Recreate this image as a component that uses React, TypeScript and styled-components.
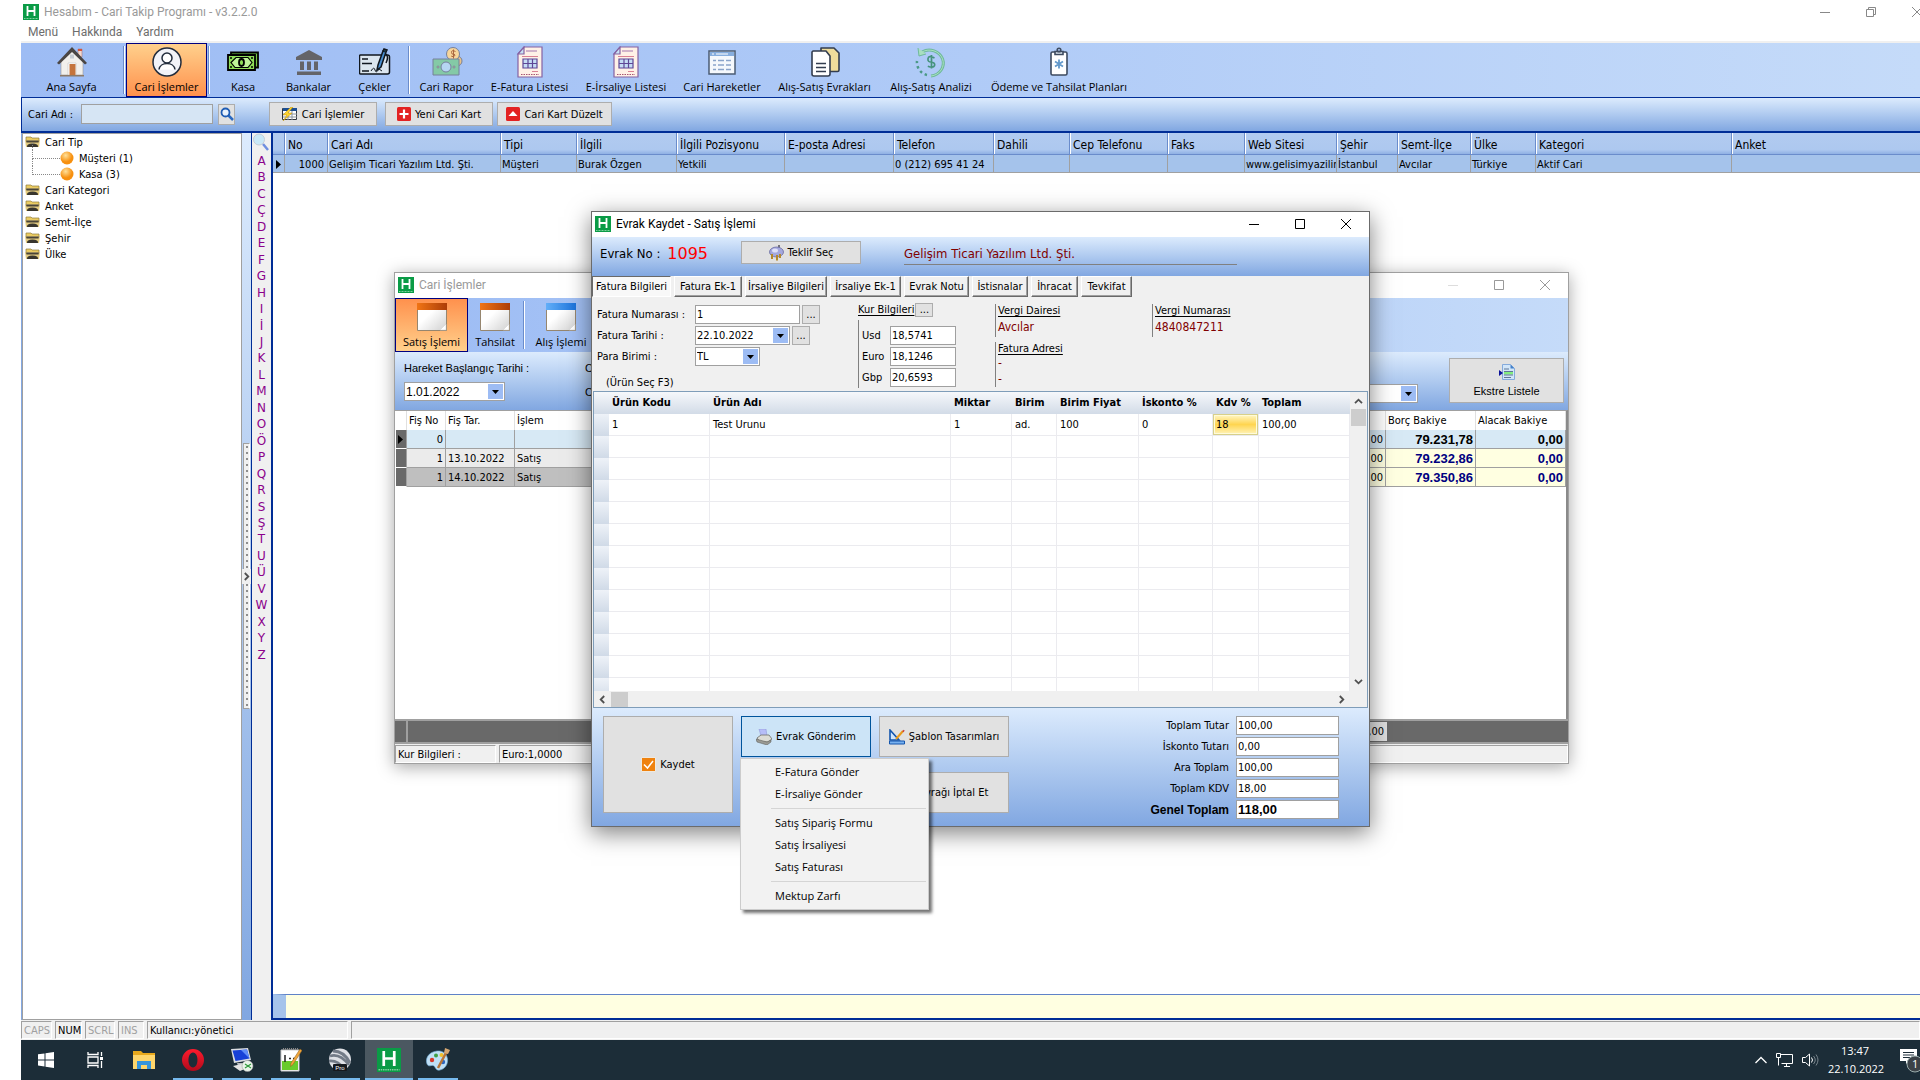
import React from "react";
import styled, { createGlobalStyle, css } from "styled-components";

const tahoma = `"DejaVu Sans Condensed", "DejaVu Sans", sans-serif`;
const segoe = `"Open Sans", "Noto Sans", sans-serif`;
const caption = `Roboto, "Open Sans", sans-serif`;
const msSans = `"Liberation Sans", Arial, sans-serif`;
const band = "linear-gradient(180deg, #dcebfd 0%, #b3cdf1 45%, #81a7e1 100%)";
const navy = "#002d96";

const Global = createGlobalStyle`
  *, *::before, *::after { box-sizing: border-box; }
  body { margin: 0; background: #fff; font-family: ${tahoma}; font-size: 11px; color: #000; overflow: hidden; }
  button, input, select { font: inherit; color: inherit; margin: 0; padding: 0; border-radius: 0; }
  ul { list-style: none; margin: 0; padding: 0; }
  h1, h2, p { margin: 0; font-weight: normal; font-size: inherit; }
  svg { display: block; flex: none; }
  table { border-collapse: separate; border-spacing: 0; table-layout: fixed; }
`;

const Screen = styled.div`
  position: relative;
  display: flex;
  flex-direction: column;
  height: 100vh;
  padding-left: 21px;
  overflow: hidden;
`;

/* ---------- title bars ---------- */
const AppTitle = styled.header`
  display: flex;
  align-items: center;
  gap: 5px;
  height: 23px;
  padding-left: 2px;
  font: 12px ${caption};
  color: #999;
`;
const WindowTitle = styled.header<{ $idle?: boolean }>`
  display: flex;
  align-items: center;
  gap: 5px;
  height: 25px;
  padding: 0 0 1px 3px;
  background: #fff;
  font: 12px ${caption};
  color: ${(p) => (p.$idle ? "#999" : "#000")};
`;
const Controls = styled.div<{ $app?: boolean }>`
  display: flex;
  margin-left: auto;
  margin-right: ${(p) => (p.$app ? "-20px" : "0")};
  color: ${(p) => (p.$app ? "#888" : "inherit")};
`;
const ControlButton = styled.button`
  display: flex;
  align-items: center;
  justify-content: center;
  width: 46px;
  height: 22px;
  border: 0;
  background: none;
`;
const MenuBar = styled.nav`
  display: flex;
  gap: 14px;
  height: 20px;
  padding-left: 7px;
  align-items: center;
  font: 12px ${caption};
  border-bottom: 2px solid #f0f0f0;
`;
const MenuButton = styled.button`
  border: 0;
  background: none;
  color: #6d6d6d;
`;

/* ---------- toolbars ---------- */
const Toolbar = styled.nav<{ $line?: boolean }>`
  display: flex;
  height: ${(p) => (p.$line ? 55 : 54)}px;
  background: linear-gradient(90deg, #9dbcf4, #b0cbf7 50%, #c5dbf9);
  border-bottom: ${(p) => (p.$line ? `1px solid ${navy}` : "0")};
`;
const Tool = styled.button<{ $w: number; $on?: "down" | "up" }>`
  display: flex;
  flex-direction: column;
  align-items: center;
  justify-content: flex-end;
  width: ${(p) => p.$w}px;
  height: 54px;
  padding-bottom: 1px;
  border: 1px solid transparent;
  background: none;
  font: 11px/17px ${segoe};
  white-space: nowrap;
  ${(p) =>
    p.$on &&
    css`
      border-color: #000080;
      background: linear-gradient(${p.$on === "down" ? "180deg" : "0deg"}, #ffd08c, #ff914d);
    `}
`;
const ToolSep = styled.span`
  width: 2px;
  margin: 3px 1px;
  background: linear-gradient(90deg, #6a8ccb 50%, #fff 50%);
`;

const SearchBand = styled.div`
  display: flex;
  align-items: center;
  height: 35px;
  padding: 0 0 1px 6px;
  background: ${band};
  border-left: 1px solid ${navy};
  border-bottom: 2px solid ${navy};
`;
const SearchLabel = styled.label`
  width: 53px;
`;
const SearchInput = styled.input`
  width: 132px;
  height: 20px;
  margin-right: 5px;
  border: 1px solid #a0a0a0;
  background: #d6e5f4;
`;
const PushButton = styled.button<{ $w?: number; $hot?: boolean; $stack?: boolean }>`
  display: inline-flex;
  flex-direction: ${(p) => (p.$stack ? "column" : "row")};
  align-items: center;
  justify-content: center;
  gap: 4px;
  width: ${(p) => (p.$w ? `${p.$w}px` : "auto")};
  background: ${(p) => (p.$hot ? "#cce4f7" : "#e1e1e1")};
  border: 1px solid ${(p) => (p.$hot ? "#00549c" : "#adadad")};
  white-space: nowrap;
`;
const SearchGo = styled(PushButton)`
  height: 21px;
`;
const SearchButtons = styled.div`
  display: flex;
  gap: 4px;
  margin-left: 34px;
  button { height: 24px; }
  button:first-child { margin-right: 4px; }
`;

/* ---------- work area ---------- */
const Work = styled.main`
  display: flex;
  flex: 1;
  min-height: 0;
  border-left: 1px solid #83a8e2;
  background: #fff;
`;
const TreePanel = styled.aside`
  width: 220px;
  border: 1px solid #a0a0a0;
  background: #fff;
`;
const TreeRow = styled.li<{ $child?: boolean }>`
  display: flex;
  align-items: center;
  gap: 5px;
  height: 16px;
  padding-left: ${(p) => (p.$child ? 9 : 2)}px;
`;
const Elbow = styled.span`
  position: relative;
  align-self: flex-start;
  width: 28px;
  height: 9px;
  margin-right: -5px;
  border: dotted #888;
  border-width: 0 0 1px 1px;
  &::before {
    content: "";
    position: absolute;
    left: -1px;
    bottom: 100%;
    height: 7px;
    border-left: 1px dotted #888;
  }
`;
const Splitter = styled.div`
  display: flex;
  flex-direction: column;
  width: 9px;
  padding: 310px 1px 0;
  background: linear-gradient(180deg, #dcebfd, #81a7e1);
`;
const Grip = styled.button`
  display: flex;
  align-items: center;
  justify-content: center;
  height: 266px;
  border: 1px solid #a0a0a0;
  border-right-color: #fff;
  background: radial-gradient(circle at 3px 3px, #8e8e8e 1px, transparent 1px) 0 0 / 7px 6px, #f0f0f0;
  span { padding: 3px 0; background: #f0f0f0; }
`;
const Letters = styled.nav`
  display: flex;
  flex-direction: column;
  gap: 2px;
  width: 22px;
  border-left: 1px solid ${navy};
  border-right: 2px solid ${navy};
  background: #f0f0f0;
`;
const LetterList = styled.ul`
  display: flex;
  flex-direction: column;
  justify-content: space-between;
  align-items: center;
  height: 510px;
`;
const LetterButton = styled.button`
  display: block;
  height: 16px;
  border: 0;
  background: none;
  font: 12px/16px "DejaVu Sans", sans-serif;
  color: #8b008b;
`;
const GridPane = styled.section`
  display: flex;
  flex: 1;
  flex-direction: column;
  min-width: 0;
  border-bottom: 2px solid ${navy};
`;
const CardTable = styled.table`
  width: 100%;
  th {
    height: 22px;
    padding: 2px 0 0 4px;
    text-align: left;
    font: 12px ${tahoma};
    white-space: nowrap;
    background: linear-gradient(180deg, #b2cbf0 0%, #adc8ef 80%, #8fb0e4 100%);
    border-bottom: 1px solid #6a8ccb;
    box-shadow: inset 1px 0 #6a8ccb, inset 2px 0 #fff;
  }
  th:first-child { box-shadow: none; }
  td {
    height: 18px;
    padding: 1px 0 0 1px;
    overflow: hidden;
    white-space: nowrap;
    background: #a5c3eb;
    border-left: 1px solid #a0a0a0;
    border-bottom: 1px solid #a0a0a0;
  }
  td:first-child { border-left: 0; padding-left: 3px; }
  td:nth-child(2) { text-align: right; padding-right: 3px; }
`;
const FilterRow = styled.div`
  height: 24px;
  margin-top: auto;
  border-top: 1px solid #5f82c8;
  border-left: 13px solid #a5c3eb;
  background: #ffffe1;
`;
const StatusBar = styled.footer`
  display: flex;
  gap: 3px;
  height: 20px;
  padding: 1px 0;
  background: #f0f0f0;
`;
const StatusCell = styled.span<{ $w?: number; $dim?: boolean }>`
  ${(p) => (p.$w ? `width: ${p.$w}px;` : "flex: 1;")}
  padding-left: 2px;
  line-height: 17px;
  white-space: nowrap;
  border: 1px solid;
  border-color: #a0a0a0 #fff #fff #a0a0a0;
  color: ${(p) => (p.$dim ? "#a0a0a0" : "#000")};
`;

/* ---------- task bar ---------- */
const TaskBar = styled.footer`
  display: flex;
  height: 40px;
  padding-left: 1px;
  background: #1c2d38;
  color: #fff;
`;
const TaskButton = styled.button<{ $open?: boolean; $active?: boolean }>`
  display: flex;
  align-items: center;
  justify-content: center;
  width: 48px;
  margin-right: 1px;
  border: 0;
  background: ${(p) => (p.$active ? "#4b5861" : "none")};
  ${(p) => p.$open && `background: linear-gradient(#76b9ed, #76b9ed) center bottom / ${p.$active ? 48 : 40}px 2px no-repeat ${p.$active ? ", #4b5861" : ""};`}
`;
const Tray = styled.div`
  display: flex;
  align-items: center;
  gap: 9px;
  margin-left: auto;
`;
const Clock = styled.time`
  width: 54px;
  text-align: center;
  font: 11px/18px ${segoe};
`;
const Notice = styled.span`
  margin-left: 9px;
  width: 20px;
  overflow: hidden;
  font: 11px ${segoe};
`;

/* ---------- account window ---------- */
const AccountWindow = styled.section`
  position: absolute;
  left: 394px;
  top: 272px;
  width: 1175px;
  border: 1px solid #a0a0a0;
  background: #f0f0f0;
  box-shadow: 0 3px 16px rgba(0, 0, 0, 0.35);
`;
const AccountFilter = styled.div`
  display: flex;
  height: 58px;
  padding: 6px 4px 0 9px;
  background: ${band};
  font: 11px ${msSans};
`;
const FilterColumn = styled.div<{ $w?: number }>`
  display: flex;
  flex-direction: column;
  gap: 4px;
  ${(p) => p.$w && `width: ${p.$w}px;`}
  label, span { line-height: 20px; }
  input { font-size: 12px; }
`;
const FilterRight = styled.div`
  display: flex;
  align-items: flex-start;
  gap: 31px;
  margin-left: auto;
  & > div { margin-top: 26px; }
  button { height: 45px; }
`;
const AccountTable = styled.table`
  width: 100%;
  border-top: 1px solid #a0a0a0;
  border-right: 2px solid #8a8a8a;
  background: #fff;
  th {
    height: 19px;
    padding: 0 0 0 2px;
    text-align: left;
    font-weight: normal;
    border-right: 1px solid #e0e0e0;
    white-space: nowrap;
  }
  td {
    height: 19px;
    padding: 0 2px;
    white-space: nowrap;
    border-right: 1px solid #a0a0a0;
    border-bottom: 1px solid #a0a0a0;
  }
`;
const AccountRow = styled.tr<{ $bg: string; $sum: string; $ink: string }>`
  td { background: ${(p) => p.$bg}; }
  td:first-child { background: #696969; border-bottom-color: #fff; border-left: 1px solid #fff; }
  td:nth-child(2), td:nth-child(n + 6) { text-align: right; }
  td:nth-child(n + 6) { background: ${(p) => p.$sum}; }
  td:nth-child(n + 7) { color: ${(p) => p.$ink}; font: bold 13px ${msSans}; }
`;
const AccountBody = styled.div`
  height: 232px;
  background: #fff;
  border-right: 2px solid #8a8a8a;
`;
const AccountSum = styled.div`
  display: flex;
  justify-content: flex-end;
  height: 25px;
  padding: 1px 181px 1px 0;
  background: linear-gradient(90deg, transparent 11px, #a0a0a0 11px, #a0a0a0 13px, transparent 13px), #696969;
  border-top: 2px solid #a0a0a0;
  border-bottom: 2px solid #a0a0a0;
  output { width: 60px; padding-right: 3px; text-align: right; line-height: 19px; background: #dfdfdf; }
`;
const AccountStatus = styled(StatusBar)`
  height: 19px;
  padding: 1px 0 0;
`;

/* ---------- document dialog ---------- */
const Dialog = styled.section`
  position: absolute;
  left: 591px;
  top: 211px;
  width: 779px;
  border: 1px solid #6b6b6b;
  background: #f0f0f0;
  box-shadow: 0 6px 22px rgba(0, 0, 0, 0.5);
`;
const DialogBand = styled.div`
  display: flex;
  height: 39px;
  padding: 4px 0 0 8px;
  background: ${band};
  font-size: 13px;
`;
const DocNo = styled.p`
  display: flex;
  align-items: center;
  gap: 7px;
  width: 141px;
  height: 24px;
  strong { font: 16px "DejaVu Sans", sans-serif; color: #f00; }
`;
const OfferButton = styled(PushButton)`
  height: 23px;
  font-size: 11px;
`;
const Company = styled.p`
  width: 333px;
  height: 24px;
  margin-left: 43px;
  padding-top: 5px;
  color: #800000;
  border-bottom: 1px solid #808080;
`;
const Tabs = styled.div`
  display: flex;
  gap: 3px;
  height: 21px;
`;
const Tab = styled.button<{ $w: number; $on?: boolean }>`
  width: ${(p) => p.$w}px;
  white-space: nowrap;
  border: 1px solid;
  border-color: ${(p) => (p.$on ? "#696969 #fff #fff #696969" : "#fff #696969 #696969 #fff")};
  box-shadow: ${(p) => (p.$on ? "none" : "inset -1px -1px #a0a0a0")};
  background: ${(p) => (p.$on ? "#f8f8f8" : "#f0f0f0")};
`;
const Form = styled.form`
  display: flex;
  height: 94px;
  padding-left: 5px;
`;
const InvoiceFields = styled.div`
  display: grid;
  grid-template-columns: 98px 1fr;
  grid-auto-rows: 19px;
  row-gap: 2px;
  width: 261px;
  padding-top: 8px;
  align-items: center;
  align-content: start;
`;
const Hint = styled.p`
  grid-column: 1 / 3;
  padding: 9px 0 0 9px;
`;
const FieldRow = styled.div`
  display: flex;
  gap: 2px;
`;
const TextBox = styled.input<{ $w: number; $bold?: boolean }>`
  width: ${(p) => p.$w}px;
  height: 19px;
  padding: 0 1px;
  border: 1px solid #a0a0a0;
  background: #fff;
  ${(p) => p.$bold && `font: bold 13px ${msSans};`}
`;
const DotsButton = styled.button<{ $h?: number }>`
  width: 18px;
  height: ${(p) => p.$h ?? 19}px;
  line-height: 10px;
  border: 1px solid #adadad;
  background: #e1e1e1;
`;
const ComboBox = styled.div<{ $w: number }>`
  display: flex;
  width: ${(p) => p.$w}px;
  height: 19px;
  border: 1px solid #a0a0a0;
  background: #fff;
  input, select { flex: 1; min-width: 0; padding: 0 1px; border: 0; background: none; appearance: none; }
`;
const Arrow = styled.span`
  display: flex;
  align-items: center;
  justify-content: center;
  width: 15px;
  margin: 1px;
  background: #9dbcf4;
`;
const Rates = styled.div`
  width: 137px;
  padding-top: 6px;
`;
const RatesHead = styled.div`
  display: flex;
  gap: 1px;
  height: 17px;
`;
const Underlined = styled.span`
  display: block;
  line-height: 13px;
  text-decoration: underline;
  text-underline-offset: 2px;
`;
const RateGrid = styled.div`
  display: grid;
  grid-template-columns: 28px auto;
  gap: 2px 0;
  align-items: center;
  padding: 6px 0 1px 3px;
  border-left: 1px solid #808080;
`;
const InfoColumn = styled.div<{ $w: number }>`
  display: flex;
  flex-direction: column;
  gap: 5px;
  width: ${(p) => p.$w}px;
  padding-top: 7px;
`;
const Info = styled.div`
  padding-left: 2px;
  border-left: 1px solid #808080;
  p { line-height: 16px; color: #800000; font-size: 12px; }
  p:only-of-type { line-height: 20px; }
`;
const ItemsFrame = styled.div`
  display: grid;
  grid-template-columns: 1fr 17px;
  margin: 0 1px;
  border: 1px solid #7f9db9;
  background: #f0f0f0;
`;
const ItemsView = styled.div`
  height: 299px;
  overflow: hidden;
  background: #fff;
`;
const ItemsTable = styled.table`
  width: 100%;
  th, td { height: 22px; padding: 0 0 0 3px; text-align: left; white-space: nowrap; }
  th { padding-bottom: 1px; background: linear-gradient(180deg, #f6f8fb, #d2dbe7); }
  td { border-right: 1px solid #ebebef; border-bottom: 1px solid #ebebef; }
  td:first-child { border: 0; background: linear-gradient(180deg, #eef2f8, #d0dae7); }
`;
const ActiveCell = styled.td`
  box-shadow: inset 0 0 0 1px #d8d08a, inset 0 0 0 2px #fffbd8;
  background: linear-gradient(180deg, #fff6c4 5%, #ffd550 50%, #fff3b8 95%);
`;
const VScroll = styled.div`
  display: flex;
  flex-direction: column;
  align-items: center;
  padding: 5px 0;
  svg:last-child { margin-top: auto; }
`;
const HScroll = styled.div`
  display: flex;
  align-items: center;
  height: 16px;
  padding: 0 4px 0 4px;
  svg:last-child { margin-left: auto; }
`;
const Thumb = styled.span<{ $v?: boolean }>`
  width: ${(p) => (p.$v ? 15 : 17)}px;
  height: ${(p) => (p.$v ? 17 : 15)}px;
  margin: ${(p) => (p.$v ? "3px 0 0" : "0 0 0 4px")};
  background: #cdcdcd;
`;
const DialogFoot = styled.div`
  display: flex;
  justify-content: space-between;
  height: 118px;
  padding: 8px 30px 0 11px;
  background: ${band};
`;
const Actions = styled.div`
  display: grid;
  grid-template: 41px 41px / 130px 130px 130px;
  gap: 15px 8px;
`;
const SaveButton = styled(PushButton)`
  grid-row: 1 / 3;
`;
const SendCell = styled.div`
  position: relative;
  display: grid;
`;
const Popup = styled.ul`
  position: absolute;
  z-index: 2;
  left: -1px;
  top: 42px;
  width: 189px;
  padding: 2px;
  border: 1px solid #ccc;
  background: #f2f2f2;
  box-shadow: 3px 3px 3px rgba(0, 0, 0, 0.55);
  font: 11px ${segoe};
`;
const PopupItem = styled.button`
  display: block;
  width: 100%;
  height: 22px;
  padding: 0 0 2px 32px;
  text-align: left;
  border: 0;
  background: none;
`;
const PopupRule = styled.li`
  height: 1px;
  margin: 3px 0 3px 28px;
  background: #d5d5d5;
`;
const Totals = styled.div`
  display: grid;
  grid-template-columns: auto 103px;
  grid-auto-rows: 19px;
  gap: 2px 7px;
  align-items: center;
  align-content: start;
  text-align: right;
`;
const TotalLabel = styled.label<{ $bold?: boolean }>`
  ${(p) => p.$bold && `font: bold 12px ${msSans};`}
`;

/* ---------- icons ---------- */
const Logo = ({ size = 16 }: { size?: number }) => (
  <svg width={size} height={size} viewBox="0 0 16 16">
    <path d="M0 0h16v16H0z" fill="#0a9b46" />
    <path d="M4.5 2v10M11.500 2v10M4.500 7h7" stroke="#fff" strokeWidth="1.800" fill="none" />
    <path d="M1 14.500h14" stroke="#7fd09c" strokeWidth="1" strokeDasharray="1 .5" />
  </svg>
);
const MinIcon = ({ faint }: { faint?: boolean }) => (
  <svg width="10" height="10"><path d="M0 5.500h10" stroke={faint ? "#ddd" : "currentColor"} /></svg>
);
const MaxIcon = () => (
  <svg width="10" height="10"><path d="M.5 .5h9v9h-9z" fill="none" stroke="currentColor" /></svg>
);
const RestoreIcon = () => (
  <svg width="10" height="10"><path d="M.5 2.500h7v7h-7zM2.500 2.500v-2h7v7h-2" fill="none" stroke="currentColor" /></svg>
);
const CloseIcon = () => (
  <svg width="10" height="10"><path d="M0 0l10 10M10 0L0 10" stroke="currentColor" /></svg>
);
const WindowButtons = ({ app, idle }: { app?: boolean; idle?: boolean }) => (
  <Controls $app={app}>
    <ControlButton aria-label="Simge durumuna küçült"><MinIcon faint={idle} /></ControlButton>
    <ControlButton aria-label="Ekranı kapla">{app ? <RestoreIcon /> : <MaxIcon />}</ControlButton>
    <ControlButton aria-label="Kapat"><CloseIcon /></ControlButton>
  </Controls>
);
const HomeIcon = () => (
  <svg width="32" height="32" viewBox="0 0 32 32">
    <path d="M22 3h4v8h-4z" fill="#f3d9cf" stroke="#a77" strokeWidth=".6" /><path d="M22 3h4v2h-4z" fill="#d4553a" />
    <path d="M5 15L16 4l11 11v14H5z" fill="#f2f0ec" stroke="#999" strokeWidth=".6" />
    <path d="M1 17L16 1l15 16-2 1.500L16 6 3 18.500z" fill="#4a4644" />
    <path d="M12 17h8v12h-8z" fill="#fff" stroke="#bbb" strokeWidth=".5" /><path d="M13.500 18h6v11h-6z" fill="#c4743d" />
    <path d="M14 8.500h4v4h-4z" fill="#c5cbd2" /><path d="M4 29h24v1.500H4z" fill="#8c7a69" />
  </svg>
);
const UserIcon = () => (
  <svg width="32" height="32" viewBox="0 0 32 32" fill="none" stroke="#222c3c" strokeWidth="1.500">
    <circle cx="16" cy="16" r="14" fill="#f2f3f8" /><circle cx="16" cy="12" r="5" fill="#fff" />
    <path d="M8 23.500c1-8 15-8 16 0" fill="#fff" />
  </svg>
);
const CashIcon = () => (
  <svg width="32" height="32" viewBox="0 0 32 32" stroke="#000" strokeWidth="1.800">
    <path d="M4 6.500h27v15H4z" fill="#73c544" />
    <path d="M1 9h27v15H1z" fill="#8ede58" /><path d="M4 16.500l5-5h12l4 5-4 5H8z" fill="#c0f39a" strokeWidth="1.200" />
    <ellipse cx="14.500" cy="16.500" rx="2.500" ry="3.500" fill="#8ede58" />
    <path d="M4 12v.1M25 12v.1M4 21v.1M25 21v.1" strokeWidth="2" strokeLinecap="round" />
  </svg>
);
const BankIcon = () => (
  <svg width="32" height="32" viewBox="0 0 32 32" fill="#646468">
    <path d="M16 4l13 7v3H3v-3zM7 15.500h4V24H7zM14 15.500h4V24h-4zM21 15.500h4V24h-4zM4 25.500h24V29H4z" />
  </svg>
);
const ChequeIcon = () => (
  <svg width="32" height="32" viewBox="0 0 32 32" fill="none" stroke="#10171f" strokeWidth="1.500">
    <path d="M1.500 9h27q2 0 2 2v15q0 2-2 2h-27q-1 0-1-1V10q0-1 1-1z" fill="#dce6ef" />
    <path d="M3 13h6M3 17.500h10M3 25h7" /><path d="M12 25q3-5 4-1t4-1l3 2" strokeWidth="1" />
    <path d="M24 5l3 1-5 15-4 3 1-5z" fill="#4a8fd0" /><path d="M24 5l1-2 3 1-1 2" fill="#245" /><path d="M27 8q3 3 0 9" />
  </svg>
);
const ReportIcon = () => (
  <svg width="32" height="32" viewBox="0 0 32 32" stroke="#76809c" strokeWidth="1">
    <circle cx="26" cy="15" r="5" fill="#e9c388" /><circle cx="22" cy="8" r="6.500" fill="#f7d59b" />
    <path d="M2 13h26v16H2z" fill="#84c9a6" /><circle cx="15" cy="21" r="5" fill="#b6d6f2" />
    <path d="M24.500 5.500q-4-2-4 .8t2.500 1.600q2.500 1.500-.8 2.800l-2-.6M22.500 3.500v9" fill="none" stroke="#ab6740" />
    <circle cx="7" cy="21" r="1" fill="#f7d59b" /><circle cx="23" cy="21" r="1" fill="#f7d59b" />
  </svg>
);
const InvoiceIcon = () => (
  <svg width="32" height="32" viewBox="0 0 32 32" fill="none" stroke="#8562a2" strokeWidth="1.200">
    <path d="M10 1h18v30H4V8z" fill="#fff1e7" /><path d="M10 1v7H4z" fill="#c9e3f5" />
    <path d="M12 5h11" stroke="#b38ab8" /><path d="M9 13h14v9H9zM14 13v9M18.500 13v9M9 17.500h14" fill="#c6dcf5" stroke="#5e4796" />
    <path d="M8 10.500h16M18 25.500h6" stroke="#d98194" /><path d="M7 28.500h18" strokeDasharray="1.500 1" stroke="#a65572" />
  </svg>
);
const ListIcon = () => (
  <svg width="32" height="32" viewBox="0 0 32 32" fill="none">
    <path d="M3 5h26v23H3z" fill="#f5f8fc" stroke="#4b5c74" strokeWidth="1.500" /><path d="M4 6h24v4H4z" fill="#87aede" />
    <path d="M6 8h2M10 8h12" stroke="#fff" /><path d="M7 14.500h3M12 14.500h6M20 14.500h5M7 19h3M12 19h6M20 19h5M7 23.500h3M12 23.500h6M20 23.500h5" stroke="#8aa4ca" strokeWidth="1.500" />
  </svg>
);
const DocsIcon = () => (
  <svg width="32" height="32" viewBox="0 0 32 32" stroke="#333d4f" strokeWidth="1.600" strokeLinejoin="round">
    <path d="M12 2h13l5 5v17q0 1.500-1.500 1.500H12z" fill="#efdc9b" /><path d="M4 5h13l4 5v18q0 2-2 2H5q-2 0-2-2V6z" fill="#fff" />
    <path d="M7 17.500h10M7 21.500h10M7 25.500h10" />
  </svg>
);
const CycleIcon = () => (
  <svg width="32" height="32" viewBox="0 0 32 32" fill="none">
    <path d="M7 6a14 13 0 1 1 9 24" stroke="#6fba9c" strokeWidth="3" /><path d="M7 6a14 13 0 1 1 9 24" stroke="#a9dfc0" strokeWidth="1" />
    <path d="M3 2l1 8 7-2" fill="#a9dfc0" stroke="#6fba9c" /><path d="M12 29A13 13 0 0 1 2 15" stroke="#4b9986" strokeWidth="2.500" strokeDasharray="2.500 3" />
    <path d="M19.500 12q-6-3-6.500.6T16.500 16q4 1 3 3.600t-6.700.6M16.500 9v13.500" stroke="#46937d" strokeWidth="1.700" />
  </svg>
);
const PlanIcon = () => (
  <svg width="32" height="32" viewBox="0 0 32 32" fill="none" stroke="#3e4b60" strokeWidth="1.600">
    <path d="M9.500 6h13q1.500 0 1.500 1.500v20q0 1.500-1.500 1.500h-13Q8 29 8 27.500v-20Q8 6 9.500 6z" fill="#fff" />
    <path d="M12 8.500V5.500h8v3z" fill="#dfe7ef" /><circle cx="16" cy="4" r="1.800" /><path d="M16 13.500v9M12 15.500l8 5M20 15.500l-8 5" stroke="#6399cb" strokeWidth="1.800" />
  </svg>
);
const SheetIcon = ({ blue }: { blue?: boolean }) => (
  <svg width="32" height="32" viewBox="0 0 32 32">
    <defs>
      <linearGradient id={blue ? "hb" : "ho"}><stop stopColor={blue ? "#62aef8" : "#f07414"} /><stop offset="1" stopColor={blue ? "#1e74dc" : "#ac3d08"} /></linearGradient>
      <linearGradient id="pg" x2="1" y2="1"><stop offset=".4" stopColor="#fff" /><stop offset="1" stopColor="#d0d0d0" /></linearGradient>
    </defs>
    <path d="M1.500 2.500h29v27h-29z" fill="url(#pg)" stroke="#96866f" /><path d="M1 2h30v7H1z" fill={`url(#${blue ? "hb" : "ho"})`} />
    <path d="M30 23l-6 6h6z" fill="#fff" stroke="#ccc" strokeWidth=".5" />
  </svg>
);
const LensIcon = () => (
  <svg width="14" height="14" viewBox="0 0 14 14" fill="none"><path d="M8.500 8.500L13 13" stroke="#2b69c0" strokeWidth="2.500" /><circle cx="5.500" cy="5.500" r="4" fill="#e8f2fd" stroke="#1e5cb4" strokeWidth="1.800" /></svg>
);
const BigLensIcon = () => (
  <svg width="18" height="18" viewBox="0 0 18 18" fill="none"><path d="M11 11l5 6" stroke="#6f8fe0" strokeWidth="2.500" /><circle cx="7" cy="6.500" r="5.500" fill="#c9e8f7" stroke="#c5ced6" /></svg>
);
const GridBoltIcon = () => (
  <svg width="16" height="14" viewBox="0 0 16 14"><path d="M.5 1.500h14v11H.5z" fill="#fff" stroke="#30353d" /><path d="M1 1h14v3H1z" fill="#1c4f92" /><path d="M1 7h14M1 10h14M6 4v9M10 4v9" stroke="#8a949f" /><path d="M9 0L1 8h4l-4 6 9-8H6l5-6z" fill="#ffd52e" stroke="#b78a0c" strokeWidth=".5" /></svg>
);
const RedIcon = ({ up }: { up?: boolean }) => (
  <svg width="14" height="14" viewBox="0 0 14 14"><rect width="14" height="14" rx="1.500" fill="#e32222" />{up ? <path d="M7 4l4.500 5h-9z" fill="#fff" /> : <path d="M7 2.500v9M2.500 7h9" stroke="#fff" strokeWidth="2.200" />}</svg>
);
const FolderIcon = () => (
  <svg width="15" height="12" viewBox="0 0 15 12"><path d="M1 4V1h5l1 1h7v3" fill="#eacb62" stroke="#8f7c3e" strokeWidth=".7" /><path d="M0 4h15l-1 7H1z" fill="#e3cb80" /><path d="M1 4.500h13l-.5 2H1.500z" fill="#4a4538" /><path d="M2 11q-.5-3.500 5.500-3.500T13 11z" fill="#38352d" /></svg>
);
const BallIcon = () => (
  <svg width="14" height="14" viewBox="0 0 14 14"><defs><radialGradient id="ball" cx=".4" cy=".3"><stop stopColor="#ffe19a" /><stop offset="1" stopColor="#f7900f" /></radialGradient></defs><circle cx="7" cy="7" r="6.500" fill="url(#ball)" /></svg>
);
const PhoneIcon = () => (
  <svg width="15" height="16" viewBox="0 0 15 16"><path d="M9 0h2v5H9z" fill="#73737b" /><ellipse cx="7.500" cy="7" rx="7" ry="5" fill="#a4a8de" stroke="#5e6199" strokeWidth=".7" /><ellipse cx="6" cy="5.500" rx="3" ry="2" fill="#dee0fa" /><path d="M3 9v5M8 10v5.500M11 9v4" stroke="#b5892d" strokeWidth="2" /></svg>
);
const TickIcon = () => (
  <svg width="15" height="15" viewBox="0 0 15 15"><path d="M.5 .5h14v14H.5z" fill="#fff0d8" /><path d="M1 1h13v13H1z" fill="#ef820f" /><path d="M3 7.500l3.500 3.500L12 4" stroke="#fff" strokeWidth="1.500" fill="none" /></svg>
);
const PrintIcon = () => (
  <svg width="16" height="16" viewBox="0 0 16 16"><path d="M3 0h7l1 7H5z" fill="#b6bdf7" stroke="#8890d2" strokeWidth=".5" /><path d="M1 9l4-3h8l3 4-4 3H4z" fill="#dcdcd5" stroke="#6f6f6a" strokeWidth=".8" /><path d="M0 10l11 3 4-2v2l-4 3L1 13z" fill="#9a9a94" stroke="#55554f" strokeWidth=".5" /></svg>
);
const RulerIcon = () => (
  <svg width="16" height="16" viewBox="0 0 16 16" fill="none"><path d="M1 1l9 10H1z" fill="#cfe4fb" stroke="#1355ad" strokeWidth="1.600" /><path d="M.5 12h15v3H.5z" fill="#78b1ef" stroke="#1355ad" /><path d="M7 10l7-8" stroke="#e99b1d" strokeWidth="2" /><path d="M14 1.500l1 1" stroke="#c33" strokeWidth="2" /></svg>
);
const CancelIcon = () => (
  <svg width="15" height="15" viewBox="0 0 15 15"><circle cx="7.500" cy="7.500" r="6.500" fill="#d92b22" /><path d="M5 5l5 5M10 5l-5 5" stroke="#fff" strokeWidth="1.800" /></svg>
);
const ExtractIcon = () => (
  <svg width="16" height="17" viewBox="0 0 16 17" fill="none"><path d="M3.500 .5h8l4 4v11h-12z" fill="#d2e6f9" stroke="#84aadb" /><path d="M11.500 .5v4h4z" fill="#4481cb" /><path d="M5 8h9v2.500H5z" fill="#83ee7f" /><path d="M5 5h5M5 7.500h9M5 11h9M5 13.500h7" stroke="#5f7796" /><path d="M0 6l4 3-4 3z" fill="#0a129a" /></svg>
);
const DownIcon = () => <svg width="7" height="4"><path d="M0 0h7L3.500 4z" /></svg>;
const Chevron = ({ turn }: { turn: number }) => (
  <svg width="9" height="9" viewBox="0 0 9 9"><path d="M1 6.200l3.500-3.500L8 6.200" transform={`rotate(${turn} 4.5 4.5)`} fill="none" stroke="#505050" strokeWidth="1.800" /></svg>
);
const PointerIcon = () => <svg width="5" height="9"><path d="M0 0v9l5-4.500z" /></svg>;

const WinIcon = () => (
  <svg width="16" height="16" fill="#fff"><path d="M0 2.300l6.500-.9v6H0zM7.500 1.200L16 0v7.400H7.500zM0 8.400h6.500v6L0 13.600zM7.500 8.400H16V16l-8.500-1.200z" /></svg>
);
const TaskViewIcon = () => (
  <svg width="17" height="16" fill="none" stroke="#fff" strokeWidth="1.300"><path d="M1 0v2.500h10V0M1 16v-2.500h10V16M1 5h10v6H1zM14.500 0v4M14.500 9v7" /><path d="M13 5h3v3h-3z" fill="#fff" stroke="none" /></svg>
);
const ExplorerIcon = () => (
  <svg width="22" height="18" viewBox="0 0 22 18"><path d="M0 0h8l2 2h12v16H0z" fill="#e9a91c" /><path d="M0 4h22v14H0z" fill="#ffd66b" /><path d="M4 10h14v8h-4v-4H8v4H4z" fill="#3695dc" /></svg>
);
const OperaIcon = () => (
  <svg width="22" height="22" viewBox="0 0 22 22"><defs><linearGradient id="op" x2="0" y2="1"><stop stopColor="#ff1b2d" /><stop offset="1" stopColor="#b00b1c" /></linearGradient></defs><path fillRule="evenodd" d="M11 0a11 11 0 1 1 0 22a11 11 0 1 1 0-22zM11 3.500c-6 0-6 15 0 15s6-15 0-15z" fill="url(#op)" /></svg>
);
const RemoteIcon = () => (
  <svg width="24" height="24" viewBox="0 0 24 24"><path d="M1 1l17-1 3 12-17 3z" fill="#dadde2" /><path d="M2.500 2.500l14.500-1 2.500 9-14 2.500z" fill="#1740d8" /><path d="M11 2l6-.5 2.500 9z" fill="#5f8cf8" /><path d="M7 15h8l3 4-9 2z" fill="#b9bcc0" /><path d="M3 18l9-2 5 4-7 3z" fill="#e4e4e4" /><circle cx="17.500" cy="18" r="5.500" fill="#eaf4ea" stroke="#999" strokeWidth=".5" /><path d="M15 16l3 2-3 2M21 16l-3 2 3 2" stroke="#319a3e" fill="none" strokeWidth="1.200" /></svg>
);
const NotesIcon = () => (
  <svg width="22" height="24" viewBox="0 0 22 24"><path d="M1 2h18v21H1z" fill="#fff" stroke="#ccc" /><path d="M2 13h16v9H2z" fill="#69cb2c" /><path d="M3 1h15" stroke="#888" strokeWidth="2" strokeDasharray="1 1" /><path d="M5 7v7M9 10.500h2M13 10.500h2" stroke="#222" strokeWidth="1.500" /><path d="M20 1l2 1.500-9 14-2.500 2 .5-3.500z" fill="#f0a53a" stroke="#8b5c1d" strokeWidth=".5" /></svg>
);
const EarthIcon = () => (
  <svg width="24" height="24" viewBox="0 0 24 24" fill="none"><circle cx="12" cy="11.500" r="11" fill="#dfe1e6" /><path d="M2 8q10-3 19 9M5 3q11 0 17 12M1 13q9-1 15 8" stroke="#737b87" strokeWidth="2.800" /><rect x="5" y="16" width="14" height="7" rx="1" fill="#16191e" /><text x="12" y="21.500" textAnchor="middle" fontSize="6" fontFamily="Liberation Sans" fill="#fff">Pro</text></svg>
);
const PaintIcon = () => (
  <svg width="26" height="24" viewBox="0 0 26 24"><path d="M12 3C3 4 0 11 2 16c2 4 5 0 7 2s2 5 6 4c6-1 9-8 7-13-1-4-5-6.500-10-6z" fill="#bfe0f6" stroke="#6da9d3" strokeWidth=".6" /><circle cx="7" cy="12" r="2.200" fill="#d8382a" /><circle cx="11" cy="7.500" r="2" fill="#3fa047" /><circle cx="16.500" cy="7" r="2" fill="#f2c02b" /><circle cx="18" cy="14" r="2.200" fill="#2d67c0" /><path d="M22 3L13 20" stroke="#b87438" strokeWidth="2.500" /><path d="M20 0l5 2-2 4-4-1z" fill="#d5a773" /></svg>
);

/* ---------- data ---------- */
const tree: { label: string; child?: boolean }[] = [
  { label: "Cari Tip" }, { label: "Müşteri (1)", child: true }, { label: "Kasa (3)", child: true },
  { label: "Cari Kategori" }, { label: "Anket" }, { label: "Semt-İlçe" }, { label: "Şehir" }, { label: "Ülke" },
];
const letters = "ABCÇDEFGHIİJKLMNOÖPQRSŞTUÜVWXYZ".split("");
const cardColumns: [string, number | undefined, string][] = [
  ["No", 43, "1000"], ["Cari Adı", 173, "Gelişim Ticari Yazılım Ltd. Şti."], ["Tipi", 76, "Müşteri"],
  ["İlgili", 100, "Burak Özgen"], ["İlgili Pozisyonu", 108, "Yetkili"], ["E-posta Adresi", 109, ""],
  ["Telefon", 100, "0 (212) 695 41 24"], ["Dahili", 76, ""], ["Cep Telefonu", 98, ""], ["Faks", 77, ""],
  ["Web Sitesi", 92, "www.gelisimyazilim"], ["Şehir", 61, "İstanbul"], ["Semt-İlçe", 73, "Avcılar"],
  ["Ülke", 65, "Türkiye"], ["Kategori", 196, "Aktif Cari"], ["Anket", undefined, ""],
];
const reportTools: [string, number, React.ReactNode][] = [
  ["Cari Rapor", 71, <ReportIcon />], ["E-Fatura Listesi", 95, <InvoiceIcon />], ["E-İrsaliye Listesi", 98, <InvoiceIcon />],
  ["Cari Hareketler", 94, <ListIcon />], ["Alış-Satış Evrakları", 111, <DocsIcon />], ["Alış-Satış Analizi", 102, <CycleIcon />],
  ["Ödeme ve Tahsilat Planları", 154, <PlanIcon />],
];
const tabs: [string, number][] = [
  ["Fatura Bilgileri", 79], ["Fatura Ek-1", 68], ["İrsaliye Bilgileri", 82], ["İrsaliye Ek-1", 71],
  ["Evrak Notu", 65], ["İstisnalar", 56], ["İhracat", 47], ["Tevkifat", 51],
];
const itemColumns: [string, number | undefined, string][] = [
  ["Ürün Kodu", 101, "1"], ["Ürün Adı", 241, "Test Urunu"], ["Miktar", 61, "1"], ["Birim", 45, "ad."],
  ["Birim Fiyat", 82, "100"], ["İskonto %", 74, "0"], ["Kdv %", 46, "18"], ["Toplam", undefined, "100,00"],
];
const totals: [string, string][] = [
  ["Toplam Tutar", "100,00"], ["İskonto Tutarı", "0,00"], ["Ara Toplam", "100,00"], ["Toplam KDV", "18,00"], ["Genel Toplam", "118,00"],
];
const accountRows = [
  { bg: "#d7e9f5", sum: "#d7e9f5", ink: "#000", no: "0", date: "", op: "", debt: "79.231,78" },
  { bg: "#ebebeb", sum: "#ffffe1", ink: "#000080", no: "1", date: "13.10.2022", op: "Satış", debt: "79.232,86" },
  { bg: "#bfbfbf", sum: "#ffffe1", ink: "#000080", no: "1", date: "14.10.2022", op: "Satış", debt: "79.350,86" },
];
const rates = [["Usd", "18,5741"], ["Euro", "18,1246"], ["Gbp", "20,6593"]];

const Account = () => (
  <AccountWindow>
    <WindowTitle $idle><Logo />Cari İşlemler<WindowButtons idle /></WindowTitle>
    <Toolbar>
      <Tool $w={73} $on="up"><SheetIcon />Satış İşlemi</Tool>
      <Tool $w={54}><SheetIcon />Tahsilat</Tool>
      <ToolSep />
      <Tool $w={70}><SheetIcon blue />Alış İşlemi</Tool>
    </Toolbar>
    <AccountFilter>
      <FilterColumn $w={181}>
        <label htmlFor="start">Hareket Başlangıç Tarihi :</label>
        <ComboBox $w={101}><input id="start" defaultValue="1.01.2022" /><Arrow><DownIcon /></Arrow></ComboBox>
      </FilterColumn>
      <FilterColumn><span>C</span><span>C</span></FilterColumn>
      <FilterRight>
        <ComboBox $w={120}><select aria-label="Döviz"><option></option></select><Arrow><DownIcon /></Arrow></ComboBox>
        <PushButton $w={115} $stack><ExtractIcon />Ekstre Listele</PushButton>
      </FilterRight>
    </AccountFilter>
    <AccountTable>
      <colgroup><col width="12" /><col width="39" /><col width="69" /><col width="120" /><col /><col width="100" /><col width="90" /><col width="90" /></colgroup>
      <thead><tr><th /><th>Fiş No</th><th>Fiş Tar.</th><th>İşlem</th><th /><th /><th>Borç Bakiye</th><th>Alacak Bakiye</th></tr></thead>
      <tbody>
        {accountRows.map((r, i) => (
          <AccountRow key={i} $bg={r.bg} $sum={r.sum} $ink={r.ink}>
            <td>{i === 0 && <PointerIcon />}</td><td>{r.no}</td><td>{r.date}</td><td>{r.op}</td><td /><td>0,00</td><td>{r.debt}</td><td>0,00</td>
          </AccountRow>
        ))}
      </tbody>
    </AccountTable>
    <AccountBody />
    <AccountSum><output>0,00</output></AccountSum>
    <AccountStatus><StatusCell $w={101}>Kur Bilgileri :</StatusCell><StatusCell>Euro:1,0000</StatusCell></AccountStatus>
  </AccountWindow>
);

const Document = () => (
  <Dialog role="dialog" aria-label="Evrak Kaydet">
    <WindowTitle><Logo />Evrak Kaydet - Satış İşlemi<WindowButtons /></WindowTitle>
    <DialogBand>
      <DocNo>Evrak No : <strong>1095</strong></DocNo>
      <OfferButton $w={120}><PhoneIcon />Teklif Seç</OfferButton>
      <Company>Gelişim Ticari Yazılım Ltd. Şti.</Company>
    </DialogBand>
    <Tabs>{tabs.map(([t, w], i) => <Tab key={t} $w={w} $on={i === 0}>{t}</Tab>)}</Tabs>
    <Form onSubmit={(e) => e.preventDefault()}>
      <InvoiceFields>
        <label htmlFor="no">Fatura Numarası :</label>
        <FieldRow><TextBox id="no" $w={105} defaultValue="1" /><DotsButton type="button">...</DotsButton></FieldRow>
        <label htmlFor="date">Fatura Tarihi :</label>
        <FieldRow><ComboBox $w={95}><input id="date" defaultValue="22.10.2022" /><Arrow><DownIcon /></Arrow></ComboBox><DotsButton type="button">...</DotsButton></FieldRow>
        <label htmlFor="cur">Para Birimi :</label>
        <ComboBox $w={65}><select id="cur"><option>TL</option></select><Arrow><DownIcon /></Arrow></ComboBox>
        <Hint>(Ürün Seç F3)</Hint>
      </InvoiceFields>
      <Rates>
        <RatesHead><Underlined>Kur Bilgileri</Underlined><DotsButton type="button" $h={14}>...</DotsButton></RatesHead>
        <RateGrid>
          {rates.map(([n, v]) => (
            <React.Fragment key={n}><label htmlFor={n}>{n}</label><TextBox id={n} $w={66} defaultValue={v} /></React.Fragment>
          ))}
        </RateGrid>
      </Rates>
      <InfoColumn $w={157}>
        <Info><Underlined>Vergi Dairesi</Underlined><p>Avcılar</p></Info>
        <Info><Underlined>Fatura Adresi</Underlined><p>-</p><p>-</p></Info>
      </InfoColumn>
      <InfoColumn $w={120}><Info><Underlined>Vergi Numarası</Underlined><p>4840847211</p></Info></InfoColumn>
    </Form>
    <ItemsFrame>
      <ItemsView>
        <ItemsTable>
          <colgroup><col width="15" />{itemColumns.map(([n, w]) => <col key={n} width={w} />)}</colgroup>
          <thead><tr><th />{itemColumns.map(([n]) => <th key={n}>{n}</th>)}</tr></thead>
          <tbody>
            <tr><td />{itemColumns.map(([n, , v]) => (n === "Kdv %" ? <ActiveCell key={n}>{v}</ActiveCell> : <td key={n}>{v}</td>))}</tr>
            {Array.from({ length: 12 }, (_, i) => <tr key={i}><td />{itemColumns.map(([n]) => <td key={n} />)}</tr>)}
          </tbody>
        </ItemsTable>
      </ItemsView>
      <VScroll><Chevron turn={0} /><Thumb $v /><Chevron turn={180} /></VScroll>
      <HScroll><Chevron turn={-90} /><Thumb /><Chevron turn={90} /></HScroll>
    </ItemsFrame>
    <DialogFoot>
      <Actions>
        <SaveButton><TickIcon />Kaydet</SaveButton>
        <SendCell>
          <PushButton $hot><PrintIcon />Evrak Gönderim</PushButton>
          <Popup>
            <li><PopupItem>E-Fatura Gönder</PopupItem></li>
            <li><PopupItem>E-İrsaliye Gönder</PopupItem></li>
            <PopupRule />
            <li><PopupItem>Satış Sipariş Formu</PopupItem></li>
            <li><PopupItem>Satış İrsaliyesi</PopupItem></li>
            <li><PopupItem>Satış Faturası</PopupItem></li>
            <PopupRule />
            <li><PopupItem>Mektup Zarfı</PopupItem></li>
          </Popup>
        </SendCell>
        <PushButton><RulerIcon />Şablon Tasarımları</PushButton>
        <span />
        <PushButton><CancelIcon />Evrağı İptal Et</PushButton>
      </Actions>
      <Totals>
        {totals.map(([n, v], i) => (
          <React.Fragment key={n}>
            <TotalLabel htmlFor={`t${i}`} $bold={i === 4}>{n}</TotalLabel>
            <TextBox id={`t${i}`} $w={103} $bold={i === 4} defaultValue={v} />
          </React.Fragment>
        ))}
      </Totals>
    </DialogFoot>
  </Dialog>
);

export default function App() {
  return (
    <Screen>
      <Global />
      <AppTitle><Logo />Hesabım - Cari Takip Programı - v3.2.2.0<WindowButtons app /></AppTitle>
      <MenuBar><MenuButton>Menü</MenuButton><MenuButton>Hakkında</MenuButton><MenuButton>Yardım</MenuButton></MenuBar>
      <Toolbar $line>
        <Tool $w={101}><HomeIcon />Ana Sayfa</Tool>
        <ToolSep />
        <Tool $w={81} $on="down"><UserIcon />Cari İşlemler</Tool>
        <ToolSep />
        <Tool $w={64}><CashIcon />Kasa</Tool>
        <Tool $w={67}><BankIcon />Bankalar</Tool>
        <Tool $w={65}><ChequeIcon />Çekler</Tool>
        <ToolSep />
        {reportTools.map(([t, w, icon]) => <Tool key={t} $w={w}>{icon}{t}</Tool>)}
      </Toolbar>
      <SearchBand>
        <SearchLabel htmlFor="q">Cari Adı :</SearchLabel>
        <SearchInput id="q" />
        <SearchGo $w={17} aria-label="Ara"><LensIcon /></SearchGo>
        <SearchButtons>
          <PushButton $w={108}><GridBoltIcon />Cari İşlemler</PushButton>
          <PushButton $w={108}><RedIcon />Yeni Cari Kart</PushButton>
          <PushButton $w={115}><RedIcon up />Cari Kart Düzelt</PushButton>
        </SearchButtons>
      </SearchBand>
      <Work>
        <TreePanel>
          <ul>
            {tree.map((t) => (
              <TreeRow key={t.label} $child={t.child}>
                {t.child ? <><Elbow /><BallIcon /></> : <FolderIcon />}{t.label}
              </TreeRow>
            ))}
          </ul>
        </TreePanel>
        <Splitter><Grip aria-label="Paneli daralt"><span><Chevron turn={90} /></span></Grip></Splitter>
        <Letters>
          <BigLensIcon />
          <LetterList>{letters.map((l) => <li key={l}><LetterButton>{l}</LetterButton></li>)}</LetterList>
        </Letters>
        <GridPane>
          <CardTable>
            <colgroup><col width="11" />{cardColumns.map(([n, w]) => <col key={n} width={w} />)}</colgroup>
            <thead><tr><th />{cardColumns.map(([n]) => <th key={n}>{n}</th>)}</tr></thead>
            <tbody><tr><td><PointerIcon /></td>{cardColumns.map(([n, , v]) => <td key={n}>{v}</td>)}</tr></tbody>
          </CardTable>
          <FilterRow />
        </GridPane>
      </Work>
      <StatusBar>
        <StatusCell $w={31} $dim>CAPS</StatusCell><StatusCell $w={27}>NUM</StatusCell><StatusCell $w={30} $dim>SCRL</StatusCell>
        <StatusCell $w={26} $dim>INS</StatusCell><StatusCell $w={201}>Kullanıcı:yönetici</StatusCell><StatusCell />
      </StatusBar>
      <TaskBar>
        <TaskButton aria-label="Başlat"><WinIcon /></TaskButton>
        <TaskButton aria-label="Görev görünümü"><TaskViewIcon /></TaskButton>
        <TaskButton aria-label="Dosya gezgini"><ExplorerIcon /></TaskButton>
        <TaskButton $open aria-label="Opera"><OperaIcon /></TaskButton>
        <TaskButton $open aria-label="Uzak masaüstü"><RemoteIcon /></TaskButton>
        <TaskButton $open aria-label="Not defteri"><NotesIcon /></TaskButton>
        <TaskButton $open aria-label="Earth"><EarthIcon /></TaskButton>
        <TaskButton $open $active aria-label="Cari Takip"><Logo size={24} /></TaskButton>
        <TaskButton $open aria-label="Paint"><PaintIcon /></TaskButton>
        <Tray>
          <svg width="12" height="8" fill="none" stroke="#fff" strokeWidth="1.300"><path d="M.5 7L6 1.500 11.500 7" /></svg>
          <svg width="17" height="16" fill="none" stroke="#fff"><path d="M4.500 2.500h12v9h-11M.5 1.500h4v4h-4zM2.500 5.500v8M8 14.500h6M10.500 11.500v3" /></svg>
          <svg width="17" height="14" fill="none" stroke="#fff"><path d="M.5 4.500h3l4-3.500v12l-4-3.500h-3z" /><path d="M9.500 4.500q2 2.500 0 5" /><path d="M11.500 3q3.500 4 0 8M14 1.500q4 5.500 0 11" stroke="#77838b" /></svg>
          <Clock>13:47<br />22.10.2022</Clock>
          <Notice>
            <svg width="24" height="26"><path d="M0 2h17v12H9l-3 3v-3H0z" fill="#fff" /><path d="M3 5.500h11M3 8h11M3 10.500h8" stroke="#1c2d38" /><circle cx="15" cy="17" r="8" fill="#3c4248" stroke="#9aa" /><text x="12" y="21" fill="#fff">1</text></svg>
          </Notice>
        </Tray>
      </TaskBar>
      <Account />
      <Document />
    </Screen>
  );
}
